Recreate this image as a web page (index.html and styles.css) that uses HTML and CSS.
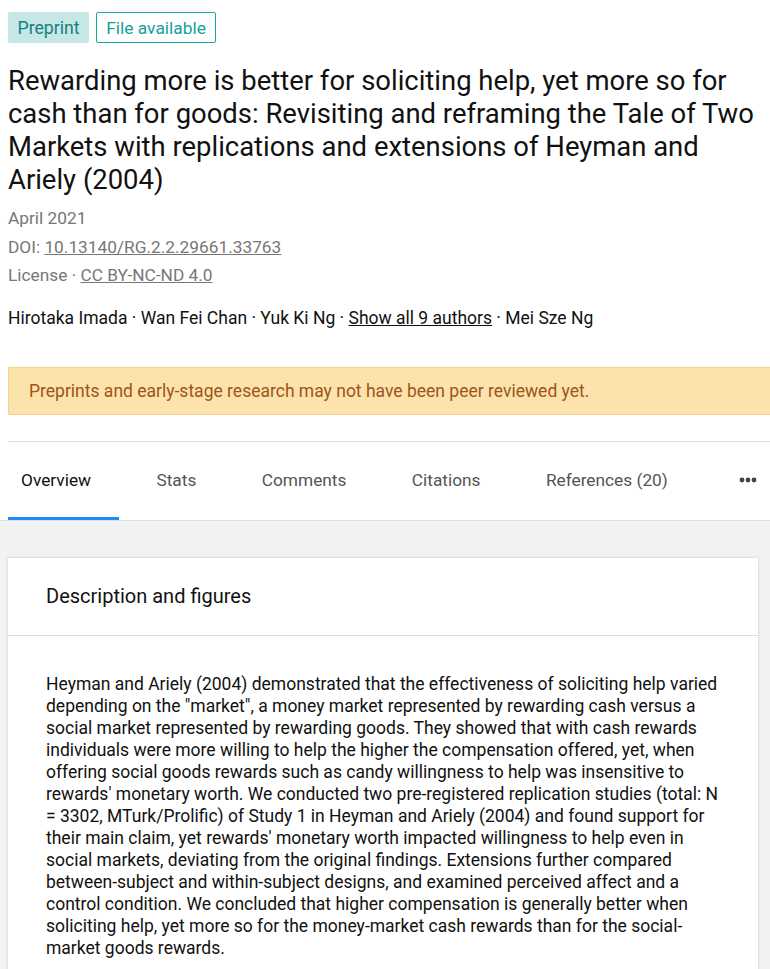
FILE: index.html
```html
<!DOCTYPE html>
<html lang="en">
<head>
<meta charset="utf-8">
<title>Preprint</title>
<link rel="stylesheet" href="styles.css">
</head>
<body>
<div class="top">
  <div class="badges">
    <span class="badge badge-fill">Preprint</span>
    <span class="badge badge-outline">File available</span>
  </div>
  <h1 class="title">Rewarding more is better for soliciting help, yet more so for cash than for goods: Revisiting and reframing the Tale of Two Markets with replications and extensions of Heyman and Ariely (2004)</h1>
  <div class="meta">
    <div class="meta-line">April 2021</div>
    <div class="meta-line">DOI: <a class="link" href="#">10.13140/RG.2.2.29661.33763</a></div>
    <div class="meta-line">License · <a class="link" href="#">CC BY-NC-ND 4.0</a></div>
  </div>
  <div class="authors">Hirotaka Imada · Wan Fei Chan · Yuk Ki Ng · <a class="link-dark" href="#">Show all 9 authors</a> · Mei Sze Ng</div>
  <div class="notice">Preprints and early-stage research may not have been peer reviewed yet.</div>
  <nav class="tabs">
    <a class="tab active" href="#">Overview</a>
    <a class="tab" href="#">Stats</a>
    <a class="tab" href="#">Comments</a>
    <a class="tab" href="#">Citations</a>
    <a class="tab" href="#">References (20)</a>
    <a class="tab more" href="#"><svg width="18" height="6" viewBox="0 0 18 6"><circle cx="3" cy="3" r="2.4" fill="#444"/><circle cx="9" cy="3" r="2.4" fill="#444"/><circle cx="15" cy="3" r="2.4" fill="#444"/></svg></a>
  </nav>
</div>
<div class="gray">
  <section class="card">
    <h2 class="card-head">Description and figures</h2>
    <p class="card-body">Heyman and Ariely (2004) demonstrated that the effectiveness of soliciting help varied depending on the "market", a money market represented by rewarding cash versus a social market represented by rewarding goods. They showed that with cash rewards individuals were more willing to help the higher the compensation offered, yet, when offering social goods rewards such as candy willingness to help was insensitive to rewards' monetary worth. We conducted two pre-registered replication studies (total: N = 3302, MTurk/Prolific) of Study 1 in Heyman and Ariely (2004) and found support for their main claim, yet rewards' monetary worth impacted willingness to help even in social markets, deviating from the original findings. Extensions further compared between-subject and within-subject designs, and examined perceived affect and a control condition. We concluded that higher compensation is generally better when soliciting help, yet more so for the money-market cash rewards than for the social-market goods rewards.</p>
  </section>
</div>
</body>
</html>
```
FILE: styles.css
```css
html, body {
  margin: 0;
  padding: 0;
  background: #fff;
  font-family: Roboto, "Liberation Sans", sans-serif;
  color: #111;
  overflow: hidden;
}
.top {
  padding-left: 8px;
}
.badges {
  display: flex;
  gap: 7px;
  padding-top: 12px;
}
.badge {
  box-sizing: border-box;
  height: 31px;
  display: inline-flex;
  align-items: center;
  padding: 0 9.5px;
  font-size: 17.7px;
  border-radius: 2px;
}
.badge-fill {
  background: #c5e8e6;
  color: #16817f;
}
.badge-outline {
  border: 1px solid #14a9a4;
  color: #16a09b;
  padding: 0 9px;
  font-size: 17.4px;
}
.title {
  margin: 22px 0 0;
  font-size: 27.45px;
  font-weight: 400;
  line-height: 33px;
  color: #111;
  padding-right: 8px;
}
.meta {
  margin-top: 7px;
  color: #777;
  font-size: 17.3px;
}
.meta-line {
  line-height: 28.5px;
}
.link {
  color: #777;
  text-decoration: underline;
}
.authors {
  margin-top: 18px;
  font-size: 17.5px;
  line-height: 20px;
}
.link-dark {
  color: #111;
  text-decoration: underline;
}
.notice {
  margin-top: 39px;
  height: 48px;
  box-sizing: border-box;
  background: #fbe3ab;
  border: 1px solid #f4d08a;
  border-right: none;
  color: #a0531a;
  font-size: 17.5px;
  display: flex;
  align-items: center;
  padding-left: 20px;
  border-radius: 2px 0 0 2px;
}
.tabs {
  margin-top: 26px;
  border-top: 1px solid #ddd;
  display: flex;
  gap: 24.4px;
  height: 78px;
  align-items: stretch;
}
.tab {
  flex-shrink: 0;
  white-space: nowrap;
  display: flex;
  align-items: center;
  padding: 2px 28px 0 13px;
  font-size: 17.3px;
  color: #555;
  text-decoration: none;
  border-bottom: 3px solid transparent;
}
.tab.active {
  color: #111;
  border-bottom-color: #1a8cff;
}
.tab.more {
  padding: 2px 0 0 19px;
}
.gray {
  background: #f2f2f2;
  border-top: 1px solid #ddd;
  padding: 37px 12px 0 8px;
  min-height: 500px;
}
.card {
  background: #fff;
  box-shadow: 0 0 3px rgba(0,0,0,0.18);
  border-radius: 1px;
}
.card-head {
  margin: 0;
  font-size: 20px;
  font-weight: 400;
  height: 77px;
  display: flex;
  align-items: center;
  padding: 0 38px;
  border-bottom: 1px solid #ddd;
}
.card-body {
  margin: 0;
  padding: 37px 38px 20px;
  font-size: 17.5px;
  line-height: 22px;
  color: #111;
}
```
